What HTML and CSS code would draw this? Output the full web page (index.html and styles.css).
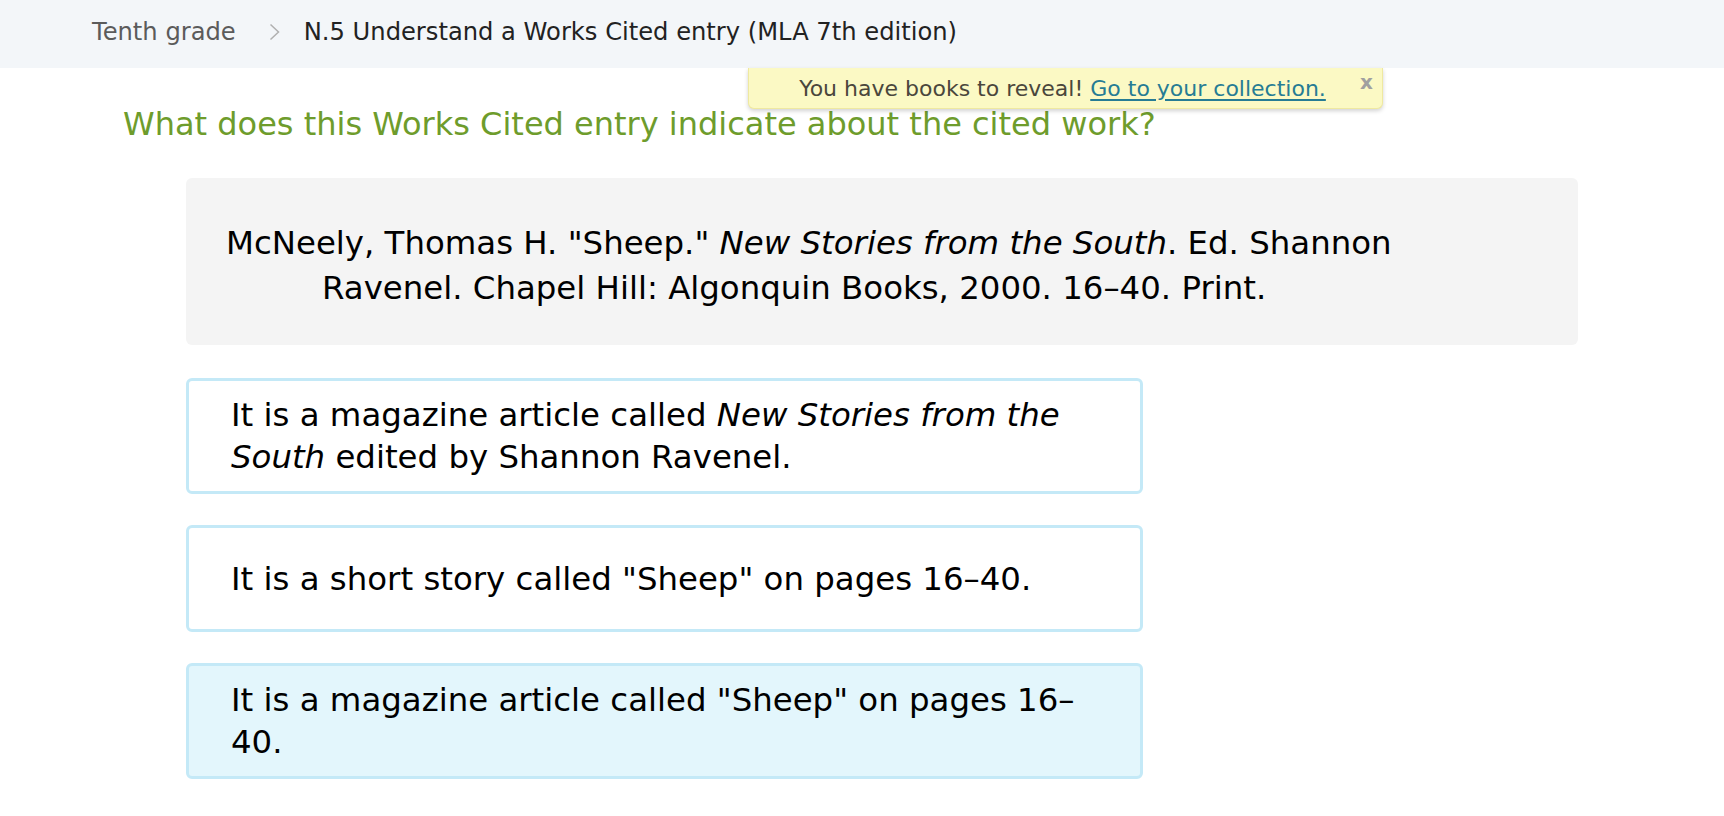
FILE: index.html
```html
<!DOCTYPE html>
<html lang="en">
<head>
<meta charset="utf-8">
<title>Understand a Works Cited entry</title>
<link rel="stylesheet" href="styles.css">
</head>
<body>
<header class="crumbs">
  <span class="crumb-parent">Tenth grade</span>
  <svg class="crumb-sep" width="11" height="18" viewBox="0 0 11 18"><path d="M1.5 1.5 L9.5 9 L1.5 16.5" fill="none" stroke="#b0b0b0" stroke-width="1.5"/></svg>
  <span class="crumb-current">N.5 Understand a Works Cited entry (MLA 7th edition)</span>
</header>

<div class="toast">
  <span class="toast-text">You have books to reveal! <a class="toast-link" href="#">Go to your collection.</a></span>
  <span class="toast-close">x</span>
</div>

<main class="main">
  <h1 class="question">What does this Works Cited entry indicate about the cited work?</h1>
  <div class="citation">
    <p class="citation-text">McNeely, Thomas H. "Sheep." <i>New Stories from the South</i>. Ed. Shannon Ravenel. Chapel Hill: Algonquin Books, 2000. 16–40. Print.</p>
  </div>
  <div class="answers">
    <div class="answer"><p>It is a magazine article called <i>New Stories from the South</i> edited by Shannon Ravenel.</p></div>
    <div class="answer"><p>It is a short story called "Sheep" on pages 16–40.</p></div>
    <div class="answer answer-selected"><p>It is a magazine article called "Sheep" on pages 16–40.</p></div>
  </div>
</main>
</body>
</html>
```

FILE: styles.css
```css
* { box-sizing: border-box; }
html, body { margin: 0; padding: 0; background: #fff; }
body {
  font-family: "DejaVu Sans", "Liberation Sans", sans-serif;
  color: #000;
  position: relative;
}

.crumbs {
  height: 68px;
  background: #f3f6f9;
  display: flex;
  align-items: center;
  padding-left: 92px;
  padding-bottom: 4px;
  font-size: 24.2px;
}
.crumb-parent { color: #5b5b5b; }
.crumb-sep { margin: 0 24px 0 33px; }
.crumb-current { color: #222; }

.toast {
  position: absolute;
  left: 748px;
  top: 68px;
  width: 635px;
  height: 41px;
  background: #fbf9c4;
  border: 1px solid #efe9a0;
  border-top: none;
  border-radius: 0 0 6px 6px;
  box-shadow: 0 2px 4px rgba(0,0,0,0.18);
  display: flex;
  align-items: center;
  justify-content: center;
  font-size: 22px;
  color: #4a473c;
}
.toast-text { margin-right: 6px; }
.toast-link { color: #267c94; text-decoration: underline; text-underline-offset: 3px; }
.toast-close {
  position: absolute;
  right: 9px;
  top: 2px;
  font-size: 20px;
  font-weight: bold;
  color: #a0a0a0;
}

.main { padding-top: 36px; }
.question {
  margin: 0 0 34px 123px;
  font-size: 32px;
  line-height: 40px;
  font-weight: normal;
  color: #6e9c2c;
}

.citation {
  margin-left: 186px;
  width: 1392px;
  height: 167px;
  background: #f4f4f4;
  border-radius: 6px;
  padding: 43px 40px 0 40px;
}
.citation-text {
  margin: 0;
  max-width: 1220px;
  font-size: 32.4px;
  line-height: 45px;
  padding-left: 96px;
  text-indent: -96px;
}

.answers {
  margin: 33px 0 0 186px;
  width: 957px;
  display: flex;
  flex-direction: column;
  gap: 31px;
}
.answer {
  min-height: 107px;
  border: 3px solid #c4e9f7;
  border-radius: 6px;
  background: #fff;
  display: flex;
  align-items: center;
  padding: 13px 42px 13px 42px;
}
.answer p {
  margin: 0;
  font-size: 32.4px;
  line-height: 42px;
}
.answer-selected { background: #e3f6fc; }
```
